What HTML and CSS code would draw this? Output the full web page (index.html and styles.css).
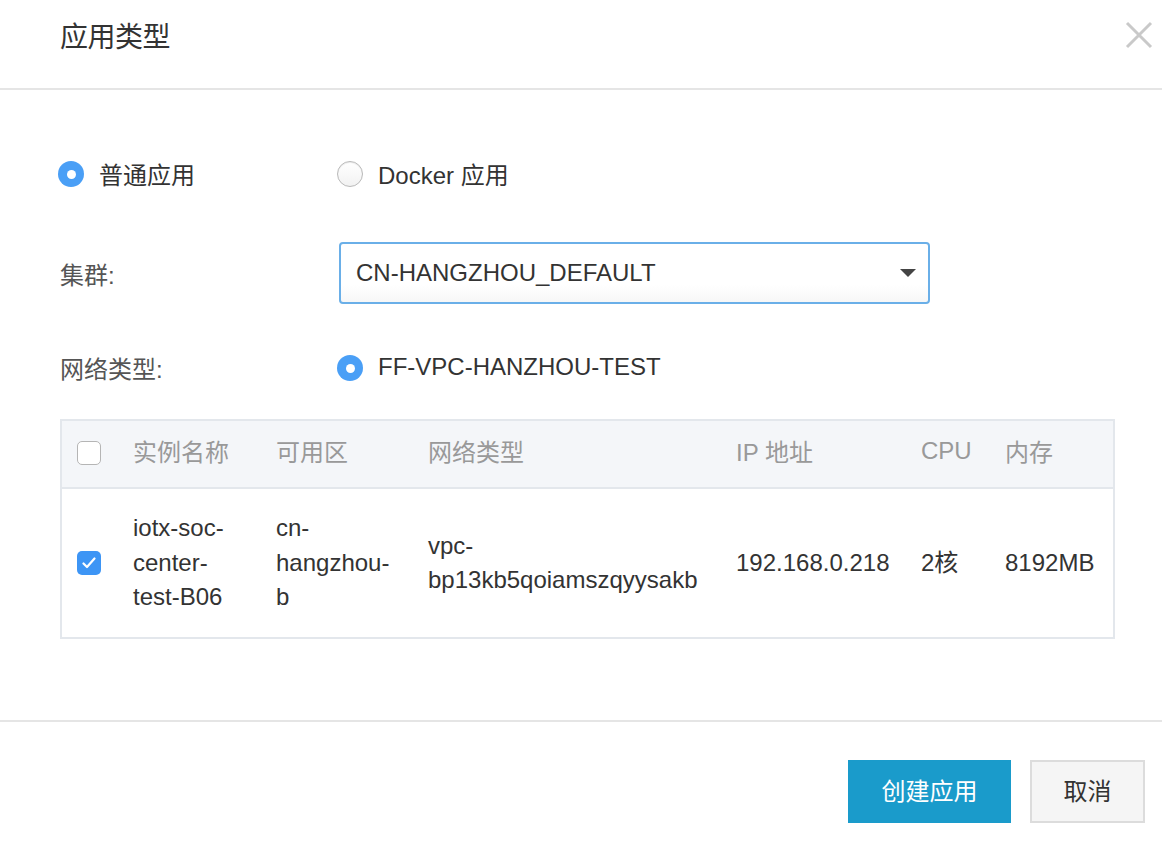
FILE: index.html
```html
<!DOCTYPE html>
<html lang="zh">
<head>
<meta charset="utf-8">
<title>应用类型</title>
<link rel="stylesheet" href="styles.css">
</head>
<body>
<div class="dialog">
  <header class="dlg-header">
    <h1 class="dlg-title">应用类型</h1>
    <button class="dlg-close" aria-label="close">
      <svg width="28" height="28" viewBox="0 0 28 28"><path d="M2 2 L26 26 M26 2 L2 26" stroke="#c9c9c9" stroke-width="3" fill="none"/></svg>
    </button>
  </header>
  <main class="dlg-body">
    <div class="row row-type">
      <label class="radio-item first"><span class="radio checked"></span><span>普通应用</span></label>
      <label class="radio-item"><span class="radio"></span><span>Docker 应用</span></label>
    </div>
    <div class="row row-cluster">
      <span class="field-label">集群:</span>
      <div class="select">
        <span>CN-HANGZHOU_DEFAULT</span>
        <span class="caret"></span>
      </div>
    </div>
    <div class="row row-net">
      <span class="field-label">网络类型:</span>
      <label class="radio-item"><span class="radio checked"></span><span>FF-VPC-HANZHOU-TEST</span></label>
    </div>
    <table class="grid">
      <colgroup>
        <col class="c0"><col class="c1"><col class="c2"><col class="c3"><col class="c4"><col class="c5"><col class="c6">
      </colgroup>
      <thead>
        <tr>
          <th class="chk-cell"><span class="checkbox"></span></th>
          <th>实例名称</th>
          <th>可用区</th>
          <th>网络类型</th>
          <th>IP 地址</th>
          <th>CPU</th>
          <th>内存</th>
        </tr>
      </thead>
      <tbody>
        <tr>
          <td class="chk-cell"><span class="checkbox checked"><svg width="14" height="12" viewBox="0 0 14 12"><path d="M1.5 6.5 L5 10 L12.5 1.5" stroke="#fff" stroke-width="2.2" fill="none" stroke-linecap="round" stroke-linejoin="round"/></svg></span></td>
          <td>iotx-soc-center-test-B06</td>
          <td>cn-hangzhou-b</td>
          <td>vpc-bp13kb5qoiamszqyysakb</td>
          <td>192.168.0.218</td>
          <td>2核</td>
          <td>8192MB</td>
        </tr>
      </tbody>
    </table>
  </main>
  <footer class="dlg-footer">
    <button class="btn btn-primary">创建应用</button>
    <button class="btn btn-default">取消</button>
  </footer>
</div>
</body>
</html>
```

FILE: styles.css
```css
* { box-sizing: border-box; }
html, body { margin: 0; padding: 0; background: #fff; }
body {
  font-family: "Liberation Sans", Arial, "Noto Sans CJK SC", sans-serif;
  font-size: 24px;
  color: #333;
  width: 1162px;
  height: 850px;
  overflow: hidden;
}
.dialog { display: flex; flex-direction: column; height: 850px; }

.dlg-header {
  height: 90px;
  border-bottom: 2px solid #e5e5e5;
  display: flex;
  align-items: center;
  justify-content: space-between;
  padding: 0 9px 0 60px;
}
.dlg-title {
  margin: 0 0 19px 0;
  font-size: 28px;
  font-weight: normal;
  color: #333;
  letter-spacing: -0.5px;
}
.dlg-close {
  border: 0; background: transparent; padding: 0;
  width: 28px; height: 28px; margin-bottom: 18px;
  display: flex;
}

.dlg-body {
  padding: 52px 47px 0 60px;
  flex: 1;
}
.row { display: flex; align-items: center; height: 62px; }
.row-type { margin-bottom: 38px; }
.row-cluster { margin-bottom: 32px; }
.row-net { margin-bottom: 21px; }

.field-label { width: 277px; color: #555; flex-shrink: 0; }

.radio-item { display: flex; align-items: center; color: #333; }
.radio-item.first { width: 279px; margin-left: -2px; }
.radio {
  width: 26px; height: 26px; border-radius: 50%;
  border: 1px solid #b9b9b9;
  background: linear-gradient(#fff, #f2f2f2);
  box-shadow: inset 0 1px 1px rgba(0,0,0,0.08);
  margin-right: 15px;
  flex-shrink: 0;
  position: relative;
  top: 1px;
}
.radio.checked {
  border: 0;
  background: #4a9ff6;
  box-shadow: none;
}
.radio.checked::after {
  content: "";
  position: absolute;
  width: 9px; height: 9px; border-radius: 50%;
  background: #fff;
  left: 8.5px; top: 8.5px;
}

.select {
  width: 591px; height: 62px;
  border: 2px solid #6aafe8;
  border-radius: 4px;
  background: linear-gradient(#fff 70%, #f7f7f7);
  display: flex; align-items: center; justify-content: space-between;
  padding: 0 12px 0 15px;
  margin-left: 2px;
}
.caret {
  width: 0; height: 0;
  border-left: 8px solid transparent;
  border-right: 8px solid transparent;
  border-top: 8px solid #444;
}

.grid {
  width: 1055px;
  margin-left: 0;
  border-collapse: separate;
  border-spacing: 0;
  table-layout: fixed;
  border: 2px solid #e3e7ec;
}
.c0 { width: 55px; }
.c1 { width: 143px; }
.c2 { width: 152px; }
.c3 { width: 308px; }
.c4 { width: 185px; }
.c5 { width: 84px; }
.c6 { width: 124px; }
.grid th {
  background: #f4f6f9;
  color: #999;
  font-weight: normal;
  text-align: left;
  height: 68px;
  padding: 0 8px 7px 16px;
  border-bottom: 2px solid #e3e7ec;
}
.grid th.chk-cell { padding-bottom: 2px; }
.grid td {
  height: 148px;
  padding: 0 16px 0 16px;
  line-height: 34.5px;
  vertical-align: middle;
  color: #333;
}
.grid td:nth-child(3) { padding-right: 18px; }
.grid td:nth-child(5), .grid td:nth-child(6), .grid td:nth-child(7) { padding-right: 2px; white-space: nowrap; }
.grid .chk-cell { padding: 0 0 0 15px; }
.checkbox {
  display: flex; align-items: center; justify-content: center;
  width: 24px; height: 24px;
  border: 1px solid #b5b5b5;
  border-radius: 5px;
  background: #fff;
}
.checkbox.checked { border: 0; background: #3d95f5; }

.dlg-footer {
  height: 130px;
  border-top: 2px solid #e5e5e5;
  display: flex;
  justify-content: flex-end;
  gap: 19px;
  padding: 38px 17px 0 0;
}
.btn {
  font-family: "Liberation Sans", Arial, "Noto Sans CJK SC", sans-serif;
  font-size: 24px;
  height: 63px;
  border-radius: 0;
  cursor: pointer;
  padding: 0 0 4px 0;
}
.btn-primary {
  width: 163px;
  background: #1a9bcb;
  color: #fff;
  border: 0;
}
.btn-default {
  width: 115px;
  background: #f5f5f5;
  color: #333;
  border: 2px solid #dcdcdc;
}
```
